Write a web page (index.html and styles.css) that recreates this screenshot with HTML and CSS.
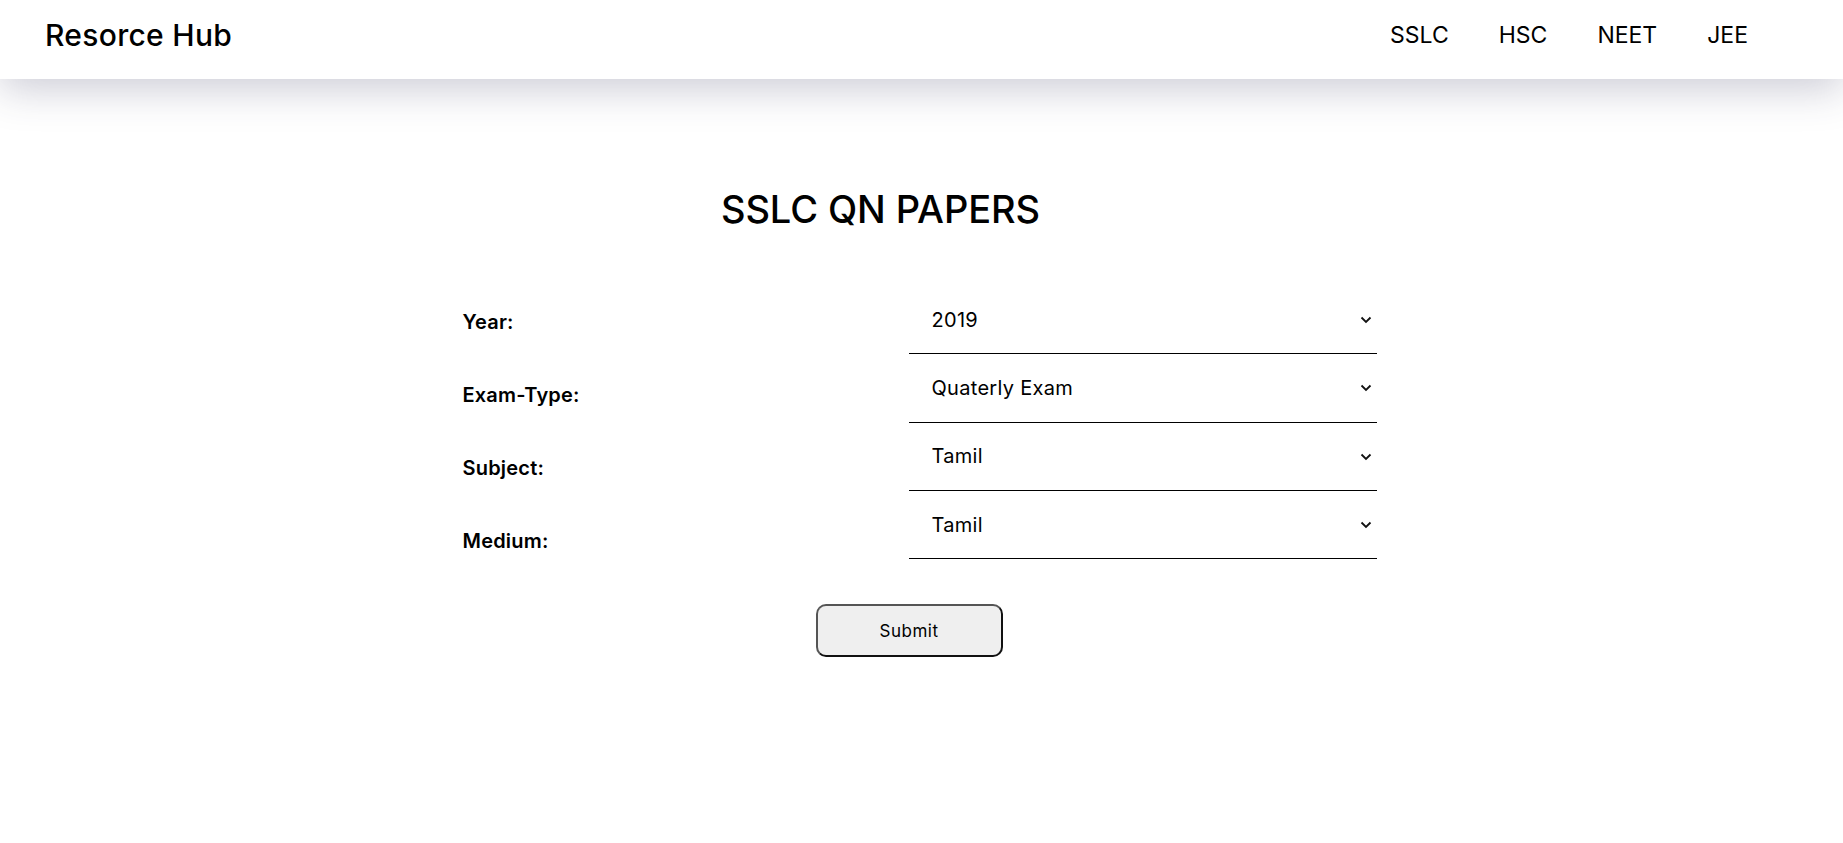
FILE: index.html
```html
<!DOCTYPE html>
<html lang="en">
<head>
<meta charset="utf-8">
<title>Resorce Hub</title>
<link rel="stylesheet" href="styles.css">
</head>
<body>
<header class="topbar">
  <div class="logo">Resorce Hub</div>
  <nav class="nav">
    <a href="#" class="nav-link">SSLC</a>
    <a href="#" class="nav-link">HSC</a>
    <a href="#" class="nav-link">NEET</a>
    <a href="#" class="nav-link">JEE</a>
  </nav>
</header>
<main class="content">
  <h1 class="title">SSLC QN PAPERS</h1>
  <form class="form">
    <div class="fields">
      <div class="labels">
        <label class="label" for="year">Year:</label>
        <label class="label" for="type">Exam-Type:</label>
        <label class="label" for="subject">Subject:</label>
        <label class="label" for="medium">Medium:</label>
      </div>
      <div class="selects">
        <div class="select-wrap">
          <select id="year" class="select"><option>2019</option></select>
          <svg class="chevron" viewBox="0 0 12 8" width="12" height="8"><path d="M1.5 1.5 L6 6 L10.5 1.5" fill="none" stroke="#111" stroke-width="1.8"/></svg>
        </div>
        <div class="select-wrap">
          <select id="type" class="select"><option>Quaterly Exam</option></select>
          <svg class="chevron" viewBox="0 0 12 8" width="12" height="8"><path d="M1.5 1.5 L6 6 L10.5 1.5" fill="none" stroke="#111" stroke-width="1.8"/></svg>
        </div>
        <div class="select-wrap">
          <select id="subject" class="select"><option>Tamil</option></select>
          <svg class="chevron" viewBox="0 0 12 8" width="12" height="8"><path d="M1.5 1.5 L6 6 L10.5 1.5" fill="none" stroke="#111" stroke-width="1.8"/></svg>
        </div>
        <div class="select-wrap">
          <select id="medium" class="select"><option>Tamil</option></select>
          <svg class="chevron" viewBox="0 0 12 8" width="12" height="8"><path d="M1.5 1.5 L6 6 L10.5 1.5" fill="none" stroke="#111" stroke-width="1.8"/></svg>
        </div>
      </div>
    </div>
    <button type="button" class="submit">Submit</button>
  </form>
</main>
</body>
</html>
```

FILE: styles.css
```css
* { box-sizing: border-box; }
html, body { margin: 0; padding: 0; background: #fff; }
body {
  font-family: "Inter", "Liberation Sans", sans-serif;
  color: #000;
}
.topbar {
  height: 79px;
  display: flex;
  align-items: center;
  justify-content: space-between;
  padding: 0 95px 0 45px;
  background: #fff;
  box-shadow: 0 10px 40px rgba(50, 50, 93, 0.25);
  position: relative;
}
.logo {
  font-size: 30px;
  font-weight: 500;
  letter-spacing: 0.3px;
  margin-top: -10px;
}
.nav {
  display: flex;
  gap: 50px;
  margin-top: -10px;
}
.nav-link {
  font-size: 23px;
  color: #000;
  text-decoration: none;
  font-weight: 400;
}
.content {
  width: 918px;
  padding-right: 4px;
  margin: 0 auto;
}
.title {
  margin: 107px 0 0;
  padding-right: 78px;
  text-align: center;
  font-size: 38px;
  font-weight: 500;
  line-height: 46px;
  letter-spacing: -0.1px;
}
.form {
  margin-top: 54px;
}
.fields {
  display: flex;
}
.labels {
  width: 446px;
  display: flex;
  flex-direction: column;
  padding-top: 20px;
  gap: 40px;
}
.label {
  font-size: 20px;
  font-weight: 600;
  line-height: 33px;
  display: block;
  letter-spacing: 0.2px;
}
.selects {
  width: 468px;
  display: flex;
  flex-direction: column;
}
.select-wrap {
  position: relative;
}
.select {
  appearance: none;
  -webkit-appearance: none;
  display: block;
  width: 100%;
  height: 68.3px;
  border: none;
  border-bottom: 1px solid #000;
  background: #fff;
  padding: 0 23px;
  font-family: inherit;
  font-size: 20px;
  letter-spacing: 0.3px;
  color: #000;
  outline: none;
}
.chevron {
  position: absolute;
  right: 5px;
  top: 30px;
}
.submit {
  display: block;
  margin: 45px 0 0 353px;
  width: 187px;
  height: 53px;
  border: 2px solid #111;
  border-top-color: #555;
  border-left-color: #555;
  border-radius: 10px;
  background: #efefef;
  font-family: inherit;
  font-size: 17px;
  letter-spacing: 0.5px;
  color: #000;
}
```
